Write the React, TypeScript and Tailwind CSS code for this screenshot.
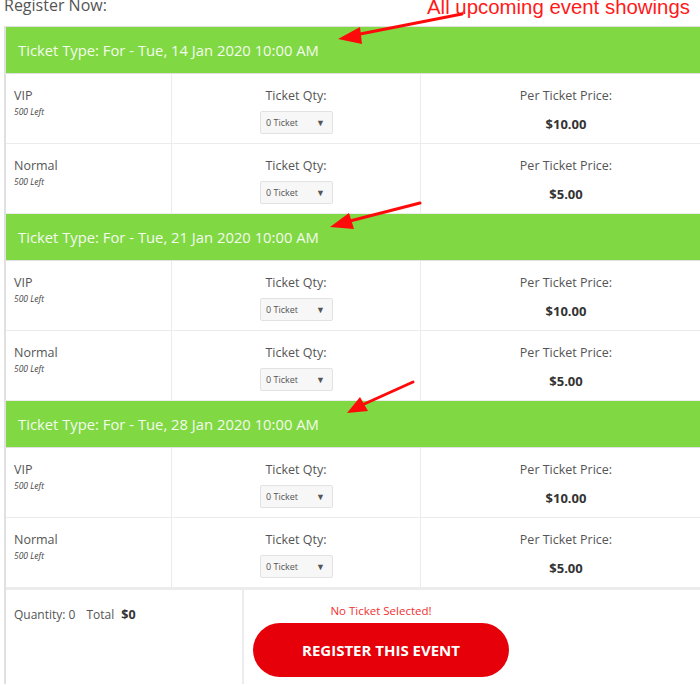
import React from "react";

const shows = ["Tue, 14 Jan 2020 10:00 AM", "Tue, 21 Jan 2020 10:00 AM", "Tue, 28 Jan 2020 10:00 AM"];
const tickets = [
  { name: "VIP", price: "$10.00" },
  { name: "Normal", price: "$5.00" },
];

function Row({ name, price }: { name: string; price: string }) {
  return (
    <div className="flex h-[70px] border-b border-[#ececec]">
      <div className="w-[166px] shrink-0 border-r border-[#ececec] pl-[8px] pt-[12px]">
        <div className="text-[12.5px] leading-[20px] text-[#555]">{name}</div>
        <div className="mt-[1px] text-[8.5px] italic leading-[10px] text-[#444]">500 Left</div>
      </div>
      <div className="flex w-[249px] shrink-0 flex-col items-center border-r border-[#ececec] pt-[12px]">
        <div className="text-[12.5px] leading-[20px] text-[#555]">Ticket Qty:</div>
        <div className="mt-[5px] ml-[1px] flex h-[23px] w-[73px] items-center justify-between rounded-[2px] border border-[#e2e2e2] bg-[#f7f7f7] pl-[5px] pr-[7px]">
          <span className="text-[9px] text-[#555]">0 Ticket</span>
          <span className="text-[9px] text-[#555]">▼</span>
        </div>
      </div>
      <div className="flex w-[290px] shrink-0 flex-col items-center pt-[12px]">
        <div className="text-[12.5px] leading-[20px] text-[#555]">Per Ticket Price:</div>
        <div className="mt-[8px] text-[13px] font-bold leading-[20px] text-[#333]">{price}</div>
      </div>
    </div>
  );
}

export default function App() {
  return (
    <div className="relative h-[685px] w-[700px] overflow-hidden bg-white" style={{ fontFamily: '"Open Sans", "Noto Sans", sans-serif' }}>
      <div className="flex h-[26px] flex-col pl-[4px]">
        <div className="-mt-[6px] text-[16px] leading-[22px] text-[#555]">Register Now:</div>
      </div>
      <div className="ml-[4px] w-[710px] border-l-2 border-t border-[#e0e0e0]">
        {shows.map((s) => (
          <div key={s}>
            <div className="flex h-[47px] items-center border-b border-[#e0e0e0] bg-[#80d843] pl-[12px]">
              <span className="text-[14.8px] text-[#f4faee]">Ticket Type: For - {s}</span>
            </div>
            {tickets.map((t) => (
              <Row key={t.name} name={t.name} price={t.price} />
            ))}
          </div>
        ))}
        <div className="flex h-[96px] border-t-2 border-[#ececec]">
          <div className="w-[238px] shrink-0 border-r-2 border-[#ececec] pl-[8px] pt-[11px]">
            <span className="text-[12px] text-[#555]">Quantity: 0</span>
            <span className="ml-[11px] text-[12px] text-[#555]">Total</span>
            <span className="ml-[7px] text-[12.5px] font-bold text-[#333]">$0</span>
          </div>
          <div className="pl-[9px] pt-[13px]">
            <div className="w-[256px] text-center text-[11.5px] leading-[16px] text-[#f23030]">No Ticket Selected!</div>
            <button className="mt-[4px] flex h-[54px] w-[256px] items-center justify-center rounded-full bg-[#e60009] text-[15px] font-bold text-white">
              REGISTER THIS EVENT
            </button>
          </div>
        </div>
      </div>

      <div className="absolute left-[427px] top-[-5px] text-[20.4px] leading-[24px] text-[#ff1a1a]" style={{ fontFamily: '"Liberation Sans", Arial, sans-serif' }}>
        All upcoming event showings
      </div>
      <svg className="pointer-events-none absolute left-0 top-0" width="700" height="685">
        <g stroke="#ff0a0a" strokeWidth="3" strokeLinecap="round" fill="#ff0a0a">
          <line x1="462" y1="14" x2="355" y2="35" />
          <polygon points="338,39 360,27 362,44" stroke="none" />
          <line x1="420" y1="203" x2="346" y2="222" />
          <polygon points="330,227 349,213 354,229" stroke="none" />
          <line x1="413" y1="382" x2="362" y2="405" />
          <polygon points="347,413 360,397 368,411" stroke="none" />
        </g>
      </svg>
    </div>
  );
}
